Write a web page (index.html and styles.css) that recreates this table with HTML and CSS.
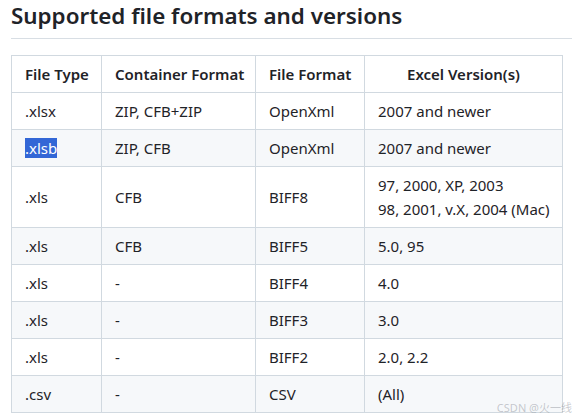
FILE: index.html
```html
<!DOCTYPE html>
<html lang="en">
<head>
<meta charset="utf-8">
<title>Supported file formats and versions</title>
<link rel="stylesheet" href="styles.css">
</head>
<body>
<div class="page">
  <h2 class="title">Supported file formats and versions</h2>
  <table class="formats">
    <colgroup>
      <col class="c1"><col class="c2"><col class="c3"><col class="c4">
    </colgroup>
    <thead>
      <tr><th>File Type</th><th>Container Format</th><th>File Format</th><th>Excel Version(s)</th></tr>
    </thead>
    <tbody>
      <tr><td>.xlsx</td><td>ZIP, CFB+ZIP</td><td>OpenXml</td><td>2007 and newer</td></tr>
      <tr><td><span class="sel">.xlsb</span></td><td>ZIP, CFB</td><td>OpenXml</td><td>2007 and newer</td></tr>
      <tr><td>.xls</td><td>CFB</td><td>BIFF8</td><td>97, 2000, XP, 2003<br>98, 2001, v.X, 2004 (Mac)</td></tr>
      <tr><td>.xls</td><td>CFB</td><td>BIFF5</td><td>5.0, 95</td></tr>
      <tr><td>.xls</td><td>-</td><td>BIFF4</td><td>4.0</td></tr>
      <tr><td>.xls</td><td>-</td><td>BIFF3</td><td>3.0</td></tr>
      <tr><td>.xls</td><td>-</td><td>BIFF2</td><td>2.0, 2.2</td></tr>
      <tr><td>.csv</td><td>-</td><td>CSV</td><td>(All)</td></tr>
    </tbody>
  </table>
</div>
<div class="watermark">CSDN @火一线</div>
</body>
</html>
```

FILE: styles.css
```css
html, body {
  margin: 0;
  padding: 0;
  background: #ffffff;
}
body {
  font-family: "Noto Sans", "Open Sans", "Noto Sans CJK SC", sans-serif;
  color: #1f2328;
  font-size: 15px;
  line-height: 24px;
  overflow: hidden;
  width: 572px;
  height: 420px;
  position: relative;
}
.page {
  padding: 1px 0 0 11px;
}
.title {
  margin: 0 0 16px 0;
  font-size: 22.4px;
  font-weight: 600;
  line-height: 30px;
  padding-bottom: 7px;
  border-bottom: 1px solid #d8dee4;
}
.formats {
  border-collapse: collapse;
  table-layout: fixed;
  width: 552px;
}
.c1 { width: 90px; }
.c2 { width: 154px; }
.c3 { width: 109px; }
.c4 { width: 198px; }
.formats th,
.formats td {
  border: 1px solid #d1d9e0;
  padding: 6px 13px;
  white-space: nowrap;
}
.formats th {
  font-weight: 600;
  text-align: center;
}
.formats td {
  text-align: left;
}
.formats tbody tr:nth-child(even) {
  background: #f6f8fa;
}
.sel {
  background: #3367d6;
  color: #ffffff;
}
.watermark {
  position: absolute;
  right: 0;
  bottom: 5px;
  font-family: "Noto Sans", "Noto Sans CJK SC", sans-serif;
  font-size: 11px;
  line-height: 14px;
  color: rgba(120, 125, 135, 0.4);
}
```
